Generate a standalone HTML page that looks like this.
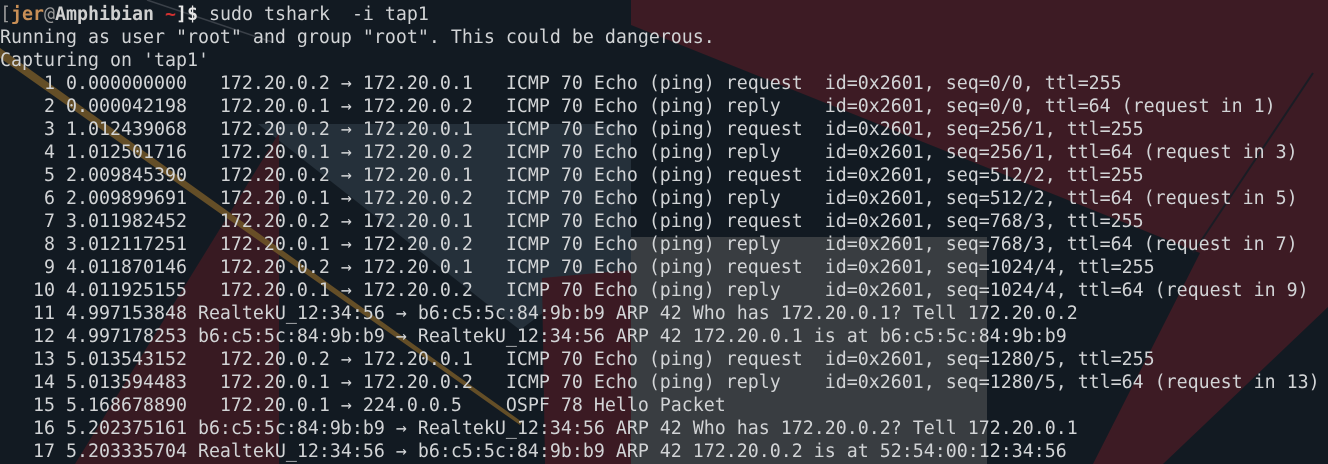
<!DOCTYPE html>
<html><head><meta charset="utf-8"><style>
html,body{margin:0;padding:0;width:1328px;height:464px;overflow:hidden;background:#121a22}
svg{position:absolute;left:0;top:0}
pre{position:absolute;left:0;top:3px;margin:0;font-family:"DejaVu Sans Mono","Liberation Mono",monospace;font-size:18.27px;line-height:23px;color:#d2d4d6;white-space:pre}
.g{color:#9a9a9a}.o{color:#c98f56;font-weight:bold}.w{color:#d0d0d0;font-weight:bold}.r{color:#d03030;font-weight:bold}.b{color:#e6e6e6;font-weight:bold}
</style></head><body>
<svg width="1328" height="464" viewBox="0 0 1328 464">
<rect width="1328" height="464" fill="#121a22"/>
<polygon points="631,0 1328,0 1328,307 1163,464 1093,464 1200,253 631,25" fill="#3d1b24"/>
<line x1="1313" y1="73" x2="1193" y2="253" stroke="#1a1c24" stroke-width="2"/>
<polygon points="258,124 631,124 631,464 590,464 560,300 520,330" fill="#25303a"/>
<polygon points="631,237 987,237 987,464 631,464" fill="#393d41"/>
<polygon points="542,278 631,270 631,464 545,464" fill="#3b1a23"/>
<polygon points="279,133 279,464 75,464" fill="#381a22"/>
<polygon points="0,48 0,58 520,425 522,422" fill="#6e5428" opacity="0.9"/>
<line x1="147" y1="0" x2="272" y2="42" stroke="#3a4048" stroke-width="1.5"/>
</svg>
<pre><span class="g">[</span><span class="o">jer</span><span class="g">@</span><span class="w">Amphibian</span> <span class="r">~</span><span class="b">]$</span> sudo tshark  -i tap1
Running as user "root" and group "root". This could be dangerous.
Capturing on 'tap1'
    1 0.000000000   172.20.0.2 → 172.20.0.1   ICMP 70 Echo (ping) request  id=0x2601, seq=0/0, ttl=255
    2 0.000042198   172.20.0.1 → 172.20.0.2   ICMP 70 Echo (ping) reply    id=0x2601, seq=0/0, ttl=64 (request in 1)
    3 1.012439068   172.20.0.2 → 172.20.0.1   ICMP 70 Echo (ping) request  id=0x2601, seq=256/1, ttl=255
    4 1.012501716   172.20.0.1 → 172.20.0.2   ICMP 70 Echo (ping) reply    id=0x2601, seq=256/1, ttl=64 (request in 3)
    5 2.009845390   172.20.0.2 → 172.20.0.1   ICMP 70 Echo (ping) request  id=0x2601, seq=512/2, ttl=255
    6 2.009899691   172.20.0.1 → 172.20.0.2   ICMP 70 Echo (ping) reply    id=0x2601, seq=512/2, ttl=64 (request in 5)
    7 3.011982452   172.20.0.2 → 172.20.0.1   ICMP 70 Echo (ping) request  id=0x2601, seq=768/3, ttl=255
    8 3.012117251   172.20.0.1 → 172.20.0.2   ICMP 70 Echo (ping) reply    id=0x2601, seq=768/3, ttl=64 (request in 7)
    9 4.011870146   172.20.0.2 → 172.20.0.1   ICMP 70 Echo (ping) request  id=0x2601, seq=1024/4, ttl=255
   10 4.011925155   172.20.0.1 → 172.20.0.2   ICMP 70 Echo (ping) reply    id=0x2601, seq=1024/4, ttl=64 (request in 9)
   11 4.997153848 RealtekU_12:34:56 → b6:c5:5c:84:9b:b9 ARP 42 Who has 172.20.0.1? Tell 172.20.0.2
   12 4.997178253 b6:c5:5c:84:9b:b9 → RealtekU_12:34:56 ARP 42 172.20.0.1 is at b6:c5:5c:84:9b:b9
   13 5.013543152   172.20.0.2 → 172.20.0.1   ICMP 70 Echo (ping) request  id=0x2601, seq=1280/5, ttl=255
   14 5.013594483   172.20.0.1 → 172.20.0.2   ICMP 70 Echo (ping) reply    id=0x2601, seq=1280/5, ttl=64 (request in 13)
   15 5.168678890   172.20.0.1 → 224.0.0.5    OSPF 78 Hello Packet
   16 5.202375161 b6:c5:5c:84:9b:b9 → RealtekU_12:34:56 ARP 42 Who has 172.20.0.2? Tell 172.20.0.1
   17 5.203335704 RealtekU_12:34:56 → b6:c5:5c:84:9b:b9 ARP 42 172.20.0.2 is at 52:54:00:12:34:56</pre>
</body></html>
